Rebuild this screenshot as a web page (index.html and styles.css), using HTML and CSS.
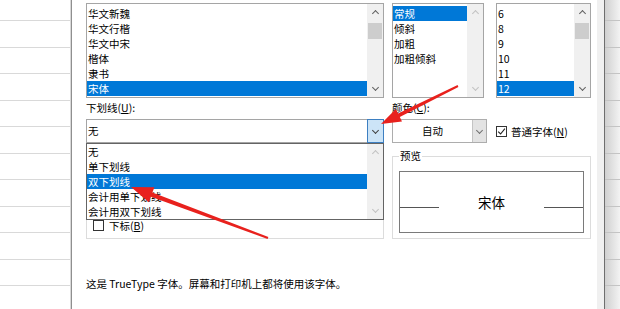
FILE: index.html
```html
<!DOCTYPE html>
<html lang="zh-CN">
<head>
  <meta charset="UTF-8" />
  <title>设置单元格格式 - 字体</title>
  <link rel="stylesheet" href="styles.css">
</head>
<body>

  <!-- 左侧工作表 -->
  <div class="sheet sheet-left">
    <div class="sheet-row first"></div>
    <div class="sheet-row"></div>
    <div class="sheet-row"></div>
    <div class="sheet-row"></div>
    <div class="sheet-row"></div>
    <div class="sheet-row"></div>
    <div class="sheet-row"></div>
    <div class="sheet-row"></div>
    <div class="sheet-row"></div>
    <div class="sheet-row"></div>
    <div class="sheet-row"></div>
    <div class="sheet-row"></div>
  </div>

  <div class="dialog">
    <div class="page">
      <div class="form">

        <!-- 字体列表 -->
        <div class="listbox">
          <ul class="items">
            <li>华文新魏</li>
            <li>华文行楷</li>
            <li>华文中宋</li>
            <li>楷体</li>
            <li>隶书</li>
            <li class="selected">宋体</li>
          </ul>
          <div class="scrollbar">
            <div class="scroll-btn"><span class="chev up"></span></div>
            <div class="thumb"></div>
            <div class="spacer"></div>
            <div class="scroll-btn"><span class="chev down"></span></div>
          </div>
        </div>

        <!-- 字形 -->
        <div class="listbox style-list">
          <ul class="items">
            <li class="selected">常规</li>
            <li>倾斜</li>
            <li>加粗</li>
            <li>加粗倾斜</li>
          </ul>
          <div class="scrollbar disabled">
            <div class="scroll-btn"><span class="chev up"></span></div>
            <div class="spacer"></div>
            <div class="scroll-btn"><span class="chev down"></span></div>
          </div>
        </div>

        <!-- 字号 -->
        <div class="listbox size-list">
          <ul class="items">
            <li>6</li>
            <li>8</li>
            <li>9</li>
            <li>10</li>
            <li>11</li>
            <li class="selected">12</li>
          </ul>
          <div class="scrollbar">
            <div class="scroll-btn"><span class="chev up"></span></div>
            <div class="thumb"></div>
            <div class="spacer"></div>
            <div class="scroll-btn"><span class="chev down"></span></div>
          </div>
        </div>

        <div class="field-label">下划线(<u>U</u>):</div>
        <div class="field-label">颜色(<u>C</u>):</div>
        <div></div>

        <!-- 下划线下拉框（已展开） -->
        <div class="combo open">
          <div class="combo-value">无</div>
          <div class="combo-btn"><span class="chev down"></span></div>
          <div class="dropdown">
            <ul class="items">
              <li>无</li>
              <li>单下划线</li>
              <li class="selected">双下划线</li>
              <li>会计用单下划线</li>
              <li>会计用双下划线</li>
            </ul>
            <div class="scrollbar disabled">
              <div class="scroll-btn"><span class="chev up"></span></div>
              <div class="spacer"></div>
              <div class="scroll-btn"><span class="chev down"></span></div>
            </div>
          </div>
        </div>

        <div class="combo color-combo">
          <div class="combo-value">自动</div>
          <div class="combo-btn"><span class="chev down"></span></div>
        </div>

        <label class="check">
          <span class="box">
            <svg width="9" height="9" viewBox="0 0 9 9"><path d="M1.2 4.6 L3.6 7 L7.9 1.6" fill="none" stroke="#222" stroke-width="1.1"/></svg>
          </span>
          <span>普通字体(<u>N</u>)</span>
        </label>

        <!-- 特殊效果（大部分被下拉列表挡住） -->
        <div class="group effects">
          <label class="check"><span class="box"></span><span>下标(<u>B</u>)</span></label>
        </div>

        <!-- 预览 -->
        <fieldset class="group preview">
          <legend>预览</legend>
          <div class="preview-box">
            <span class="rule"></span>
            <span class="sample">宋体</span>
            <span class="rule"></span>
          </div>
        </fieldset>
      </div>

      <p class="note">这是 TrueType 字体。屏幕和打印机上都将使用该字体。</p>
    </div>
    <div class="edge"></div>
  </div>

  <!-- 右侧工作表 -->
  <div class="sheet sheet-right">
    <div class="sheet-row first"></div>
    <div class="sheet-row"></div>
    <div class="sheet-row"></div>
    <div class="sheet-row"></div>
    <div class="sheet-row"></div>
    <div class="sheet-row"></div>
    <div class="sheet-row"></div>
    <div class="sheet-row"></div>
    <div class="sheet-row"></div>
    <div class="sheet-row"></div>
    <div class="sheet-row"></div>
    <div class="sheet-row"></div>
  </div>

  <!-- 红色箭头标注 -->
  <svg class="marks" width="620" height="309" viewBox="0 0 620 309">
    <polygon fill="#e8211d" points="457.6,85.1 398.1,113.4 395.8,108.9 381,124 402,121.4 399.8,116.9 458.4,86.9"/>
    <polygon fill="#e8211d" points="268.4,237.1 152.4,192.6 154.4,187.2 131,187 148.8,202.2 150.9,196.7 267.6,238.9"/>
  </svg>

</body>
</html>
```

FILE: styles.css
```css
* {
  box-sizing: border-box;
}
html, body {
  margin: 0;
}
body {
  width: 620px;
  height: 309px;
  overflow: hidden;
  display: flex;
  position: relative;
  background: #fff;
  color: #000;
  font-family: "Noto Sans CJK SC", "Noto Sans", sans-serif;
  font-size: 10.5px;
}
u {
  text-decoration-thickness: 1px;
  text-underline-offset: 1px;
}

/* 工作表背景 */
.sheet {
  flex: none;
  display: flex;
  flex-direction: column;
}
.sheet-left {
  width: 71px;
  background: #fff;
}
.sheet-right {
  width: 15px;
  background: linear-gradient(to right, #d0d0d0, #f3f3f3);
}
.sheet-row {
  flex: none;
  height: 26.5px;
  border-bottom: 1px solid #d9d9d9;
}
.sheet-row.first {
  height: 21px;
}
.sheet-right .sheet-row {
  border-bottom-color: #c4c4c4;
}

/* 对话框 */
.dialog {
  flex: none;
  width: 534px;
  display: flex;
  border-left: 1px solid #8f8f8f;
  border-right: 1px solid #6e6e6e;
  box-shadow: -1px 0 0 #d8d8d8;
}
.page {
  flex: 1;
  background: #fff;
  padding: 3px 6px 0 14px;
}
.edge {
  width: 7px;
  background: #f0f0f0;
}

.form {
  display: grid;
  grid-template-columns: 298px 96px 95px;
  grid-template-rows: 95px 21px 24px auto;
  column-gap: 8px;
}

/* 列表框 */
.listbox {
  display: flex;
  height: 95px;
  border: 1px solid #a5a5a5;
  background: #fff;
}
.style-list {
  width: 92px;
}
.items {
  flex: 1;
  min-width: 0;
  list-style: none;
  margin: 0;
  padding: 2px 0 0;
  overflow: hidden;
}
.items li {
  height: 15px;
  line-height: 15px;
  padding-left: 1px;
  white-space: nowrap;
}
.items li.selected {
  background: #0078d7;
  color: #fff;
}

/* 滚动条 */
.scrollbar {
  flex: none;
  width: 16px;
  display: flex;
  flex-direction: column;
  align-items: center;
  background: #f0f0f0;
}
.scroll-btn {
  flex: none;
  width: 100%;
  height: 17px;
  display: flex;
  align-items: center;
  justify-content: center;
}
.thumb {
  flex: none;
  width: 14px;
  height: 16px;
  margin-top: 2px;
  background: #cdcdcd;
}
.spacer {
  flex: 1;
}
.chev {
  width: 5px;
  height: 5px;
  border: solid #606060;
  border-width: 1px 1px 0 0;
}
.chev.up {
  transform: translateY(1px) rotate(-45deg);
}
.chev.down {
  transform: translateY(-1px) rotate(135deg);
}
.scrollbar.disabled .chev {
  border-color: #c2c2c2;
}

.field-label {
  padding-top: 3px;
  line-height: 14px;
  white-space: nowrap;
}

/* 下拉框 */
.combo {
  position: relative;
  display: flex;
  height: 24px;
  border: 1px solid #a5a5a5;
  background: #fff;
}
.combo-value {
  flex: 1;
  line-height: 22px;
  padding-left: 1px;
}
.combo-btn {
  flex: none;
  width: 17px;
  margin: -1px -1px -1px 0;
  display: flex;
  align-items: center;
  justify-content: center;
  background: #cce4f7;
  border: 1px solid #3d7fc1;
}
.combo-btn .chev {
  border-color: #404040;
}
.color-combo {
  width: 95px;
  border-color: #adadad;
}
.color-combo .combo-value {
  text-align: center;
  padding-left: 0;
}
.color-combo .combo-btn {
  width: 14px;
  margin: 0;
  background: #e3e3e3;
  border: none;
  border-left: 1px solid #c4c4c4;
}
.color-combo .combo-btn .chev {
  border-color: #707070;
}

/* 展开的列表 */
.dropdown {
  position: absolute;
  top: 23px;
  left: -1px;
  right: -1px;
  height: 77px;
  z-index: 2;
  display: flex;
  border: 1px solid #646464;
  background: #fff;
}
.dropdown .items {
  padding-top: 0;
}

/* 复选框 */
.check {
  display: flex;
  align-items: center;
  gap: 4px;
  white-space: nowrap;
}
.box {
  flex: none;
  width: 11px;
  height: 11px;
  border: 1px solid #333;
  background: #fff;
  display: flex;
  align-items: center;
  justify-content: center;
}

/* 分组框 */
.group {
  margin: 6px 0 0;
  min-width: 0;
  border: 1px solid #dcdcdc;
}
.group legend {
  padding: 0 1px;
  line-height: 14px;
}
.effects {
  display: flex;
  flex-direction: column;
  justify-content: flex-end;
  padding: 0 6px 2px;
}
.effects .check {
  height: 22px;
  gap: 5px;
}
.preview {
  grid-column: 2 / span 2;
  padding: 8px 6px 5px;
}
.preview-box {
  height: 62px;
  border: 1px solid #7a7a7a;
  display: flex;
  align-items: center;
  justify-content: space-between;
}
.rule {
  width: 39px;
  height: 1px;
  margin-top: 10px;
  background: #555;
}
.sample {
  font-size: 13.5px;
}

.note {
  margin: 38px 0 0;
  line-height: 14px;
  white-space: nowrap;
}

/* 标注箭头 */
.marks {
  position: absolute;
  left: 0;
  top: 0;
  z-index: 5;
  pointer-events: none;
}
```
